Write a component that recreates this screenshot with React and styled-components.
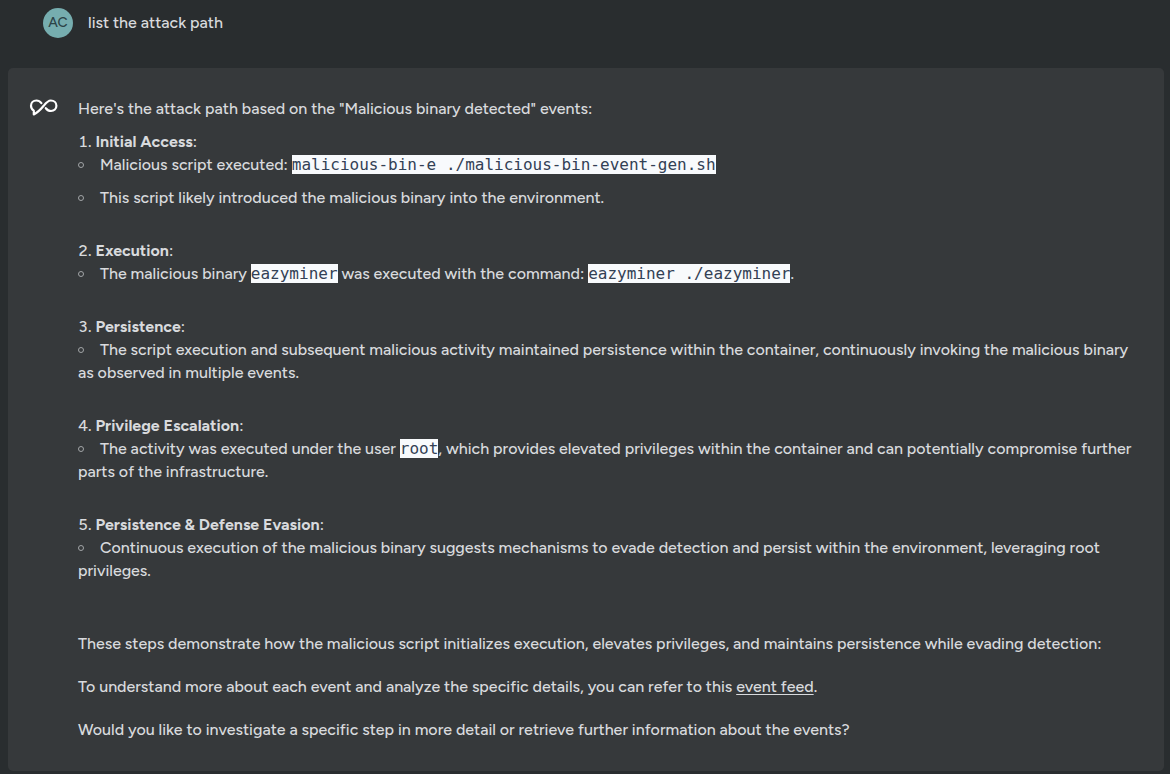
import React from "react";
import styled, { createGlobalStyle } from "styled-components";

const GlobalStyle = createGlobalStyle`
  *, *::before { box-sizing: border-box; }
  body { margin: 0; background: #292d2f; color: #d8dadd; font: 500 16px/23px Figtree, Lato, sans-serif; }
  p, ol, ul { margin: 0; padding: 0; }
`;
const Page = styled.main`padding: 8px 6px 4px 8px;`;
const Prompt = styled.section`display: flex; align-items: center; gap: 15px; padding: 0 35px; height: 29px; margin-bottom: 31px;`;
const Avatar = styled.span`width: 30px; height: 30px; border-radius: 50%; background: #76adaf; color: #2c4347; font-size: 14px; font-weight: 500; line-height: 29px; text-align: center;`;
const Answer = styled.article`display: flex; gap: 20px; padding: 29px 28px 30px 21px; background: #36393b; border-radius: 5px; min-height: 702px;`;
const Logo = styled.svg`flex: none; width: 29px; height: 20px;`;
const Body = styled.div`flex: 1;`;
const Steps = styled.ol`list-style: none; margin: 10px 0 50px;`;
const Step = styled.li`font-variant-numeric: tabular-nums; & + & { margin-top: 30px; }`;
const Points = styled.ul`list-style: none;`;
const Point = styled.li`
  & + & { margin-top: 10px; }
  &::before { content: ""; display: inline-block; width: 6px; height: 6px; border: 1px solid #a2a5a7; border-radius: 50%; margin-right: 16px; vertical-align: 2px; }
`;
const Strong = styled.strong`font-weight: 700;`;
const Code = styled.code`font: 16px/18px "DejaVu Sans Mono", monospace; background: #f8fafc; color: #334155;`;
const Para = styled.p`& + & { margin-top: 20px; }`;
const Link = styled.a`color: inherit; text-underline-offset: 2px;`;

const steps = [
  ["Initial Access", [<>Malicious script executed: <Code>malicious-bin-e ./malicious-bin-event-gen.sh</Code></>, "This script likely introduced the malicious binary into the environment."]],
  ["Execution", [<>The malicious binary <Code>eazyminer</Code> was executed with the command: <Code>eazyminer ./eazyminer</Code>.</>]],
  ["Persistence", ["The script execution and subsequent malicious activity maintained persistence within the container, continuously invoking the malicious binary as observed in multiple events."]],
  ["Privilege Escalation", [<>The activity was executed under the user <Code>root</Code>, which provides elevated privileges within the container and can potentially compromise further parts of the infrastructure.</>]],
  ["Persistence & Defense Evasion", ["Continuous execution of the malicious binary suggests mechanisms to evade detection and persist within the environment, leveraging root privileges."]],
];

export default function App() {
  return (
    <Page>
      <GlobalStyle />
      <Prompt><Avatar>AC</Avatar><p>list the attack path</p></Prompt>
      <Answer>
        <Logo viewBox="0 0 29 20" fill="none" stroke="#fff" strokeWidth="2.2" strokeLinejoin="round" strokeLinecap="round"><path d="M12.4 6.2 C11 4.3 9.5 3.5 7.4 3.5 C4.2 3.5 2 5.7 2 8.7 C2 11 3 12.5 4.8 13.6 V17.4 C9 15.4 12 12.1 14.7 8.8 C17 5.8 18.7 3.5 21.8 3.5 C25.1 3.5 27.4 5.8 27.4 8.8 C27.4 11.8 25.1 14 22 14 C19.8 14 18.2 13 16.8 11.2" /></Logo>
        <Body>
          <Para>Here's the attack path based on the "Malicious binary detected" events:</Para>
          <Steps>
            {steps.map(([title, points], i) => (
              <Step key={title}>
                {i + 1}. <Strong>{title}</Strong>:
                <Points>{points.map((point, n) => <Point key={n}>{point}</Point>)}</Points>
              </Step>
            ))}
          </Steps>
          <Para>These steps demonstrate how the malicious script initializes execution, elevates privileges, and maintains persistence while evading detection:</Para>
          <Para>To understand more about each event and analyze the specific details, you can refer to this <Link href="#events">event feed</Link>.</Para>
          <Para>Would you like to investigate a specific step in more detail or retrieve further information about the events?</Para>
        </Body>
      </Answer>
    </Page>
  );
}
